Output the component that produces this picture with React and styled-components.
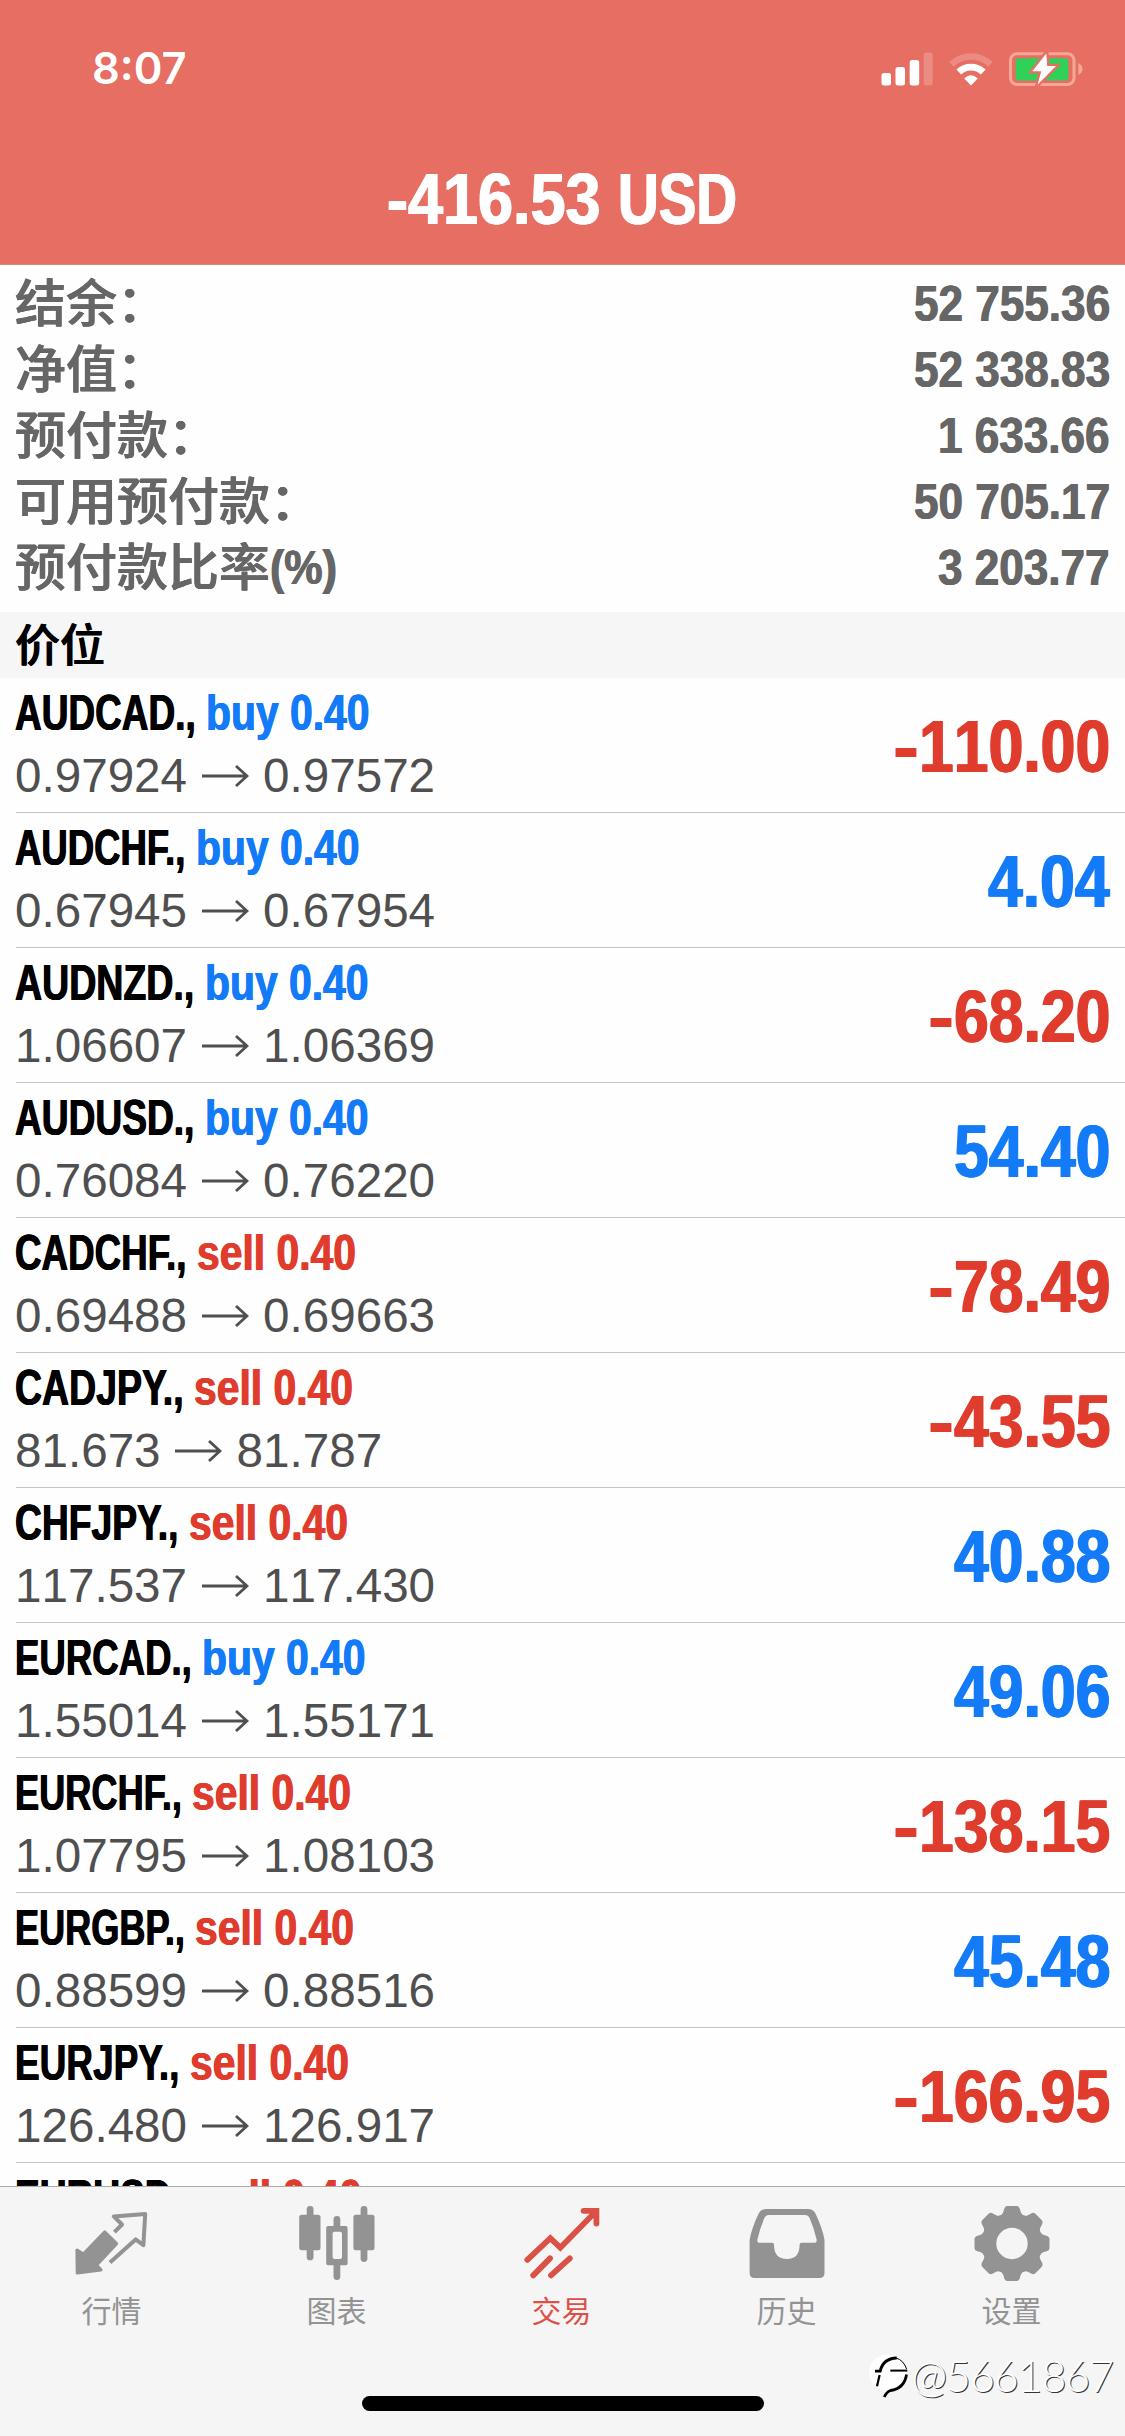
import React, { useLayoutEffect, useRef, useState } from 'react';
import styled, { createGlobalStyle } from 'styled-components';

const RED = '#e03c2d';
const BLUE = '#137bf8';
const LATIN = '"Liberation Sans", Arial, sans-serif';
const HAN = '"Noto Sans CJK SC", sans-serif';

const GlobalStyle = createGlobalStyle`
  *, *::before, *::after { box-sizing: border-box; }
  body { margin: 0; background: #fff; }
`;

const Screen = styled.div`
  position: relative;
  display: flex;
  flex-direction: column;
  width: 1125px;
  height: 2436px;
  overflow: hidden;
  background: #fefefe;
  font-family: ${LATIN};
  font-kerning: none;
`;

const Header = styled.header`
  flex: none;
  height: 265px;
  background: #e76e62;
  border-bottom: 1px solid #c98f88;
  color: #fff;
`;

const StatusBar = styled.div`
  display: flex;
  align-items: center;
  justify-content: space-between;
  height: 138px;
  padding: 0 42px 0 92px;
`;

const Clock = styled.span`
  font: 600 43.5px/1 Inter, sans-serif;
`;

const StatusIcons = styled.div`
  display: flex;
  gap: 16px;
`;

const Title = styled.h1`
  display: flex;
  justify-content: center;
  margin: 0 2px 0 0;
  padding-top: 1px;
  font-size: 73px;
  line-height: 120px;
  font-weight: bold;
`;

const FitBox = styled.span`
  display: inline-block;
  white-space: pre;
  text-shadow: ${p => `${p.$bold}px 0 currentColor, -${p.$bold}px 0 currentColor`};
`;

const FitInner = styled.span`
  display: inline-block;
  transform-origin: 0 50%;
`;

/* Condenses its text horizontally, to a given width or by a given ratio. */
function Condensed({ width, ratio, bold = 0.6, children }) {
  const inner = useRef(null);
  const [natural, setNatural] = useState(0);
  useLayoutEffect(() => {
    setNatural(parseFloat(getComputedStyle(inner.current).width));
  }, [children]);
  const w = width || natural * ratio;
  const k = natural ? w / natural : 1;
  return (
    <FitBox $bold={bold} style={{ width: w || undefined }}>
      <FitInner ref={inner} style={{ transform: `scaleX(${k})` }}>{children}</FitInner>
    </FitBox>
  );
}

const Summary = styled.section`
  flex: none;
  padding: 6px 15px 11px;
  color: #666;
`;

const SummaryRow = styled.div`
  display: flex;
  justify-content: space-between;
  height: 66px;
`;

const SummaryLabel = styled.span`
  display: flex;
  font: 500 51px/58px ${HAN};
  text-shadow: 0.5px 0 currentColor, -0.5px 0 currentColor;
`;

const Unit = styled.span`
  font: bold 49px/64px ${LATIN};
`;

const SummaryValue = styled.span`
  font-weight: bold;
  font-size: 50.5px;
  line-height: 66px;
`;

const SectionHeader = styled.h2`
  flex: none;
  height: 66px;
  margin: 0;
  padding-left: 15px;
  background: #f6f6f6;
  color: #000;
  font: 500 45px/61px ${HAN};
  text-shadow: 0.4px 0 currentColor, -0.4px 0 currentColor;
`;

const Positions = styled.main`
  flex: 1;
  min-height: 0;
  overflow: hidden;
`;

const Position = styled.article`
  display: flex;
  justify-content: space-between;
  height: 135px;
  margin-left: 16px;
  padding: 3px 15px 0 0;
  border-bottom: 1px solid #c3c5c5;
`;

const Details = styled.div`
  margin-left: -1px;
`;

const Name = styled.div`
  display: flex;
  height: 63px;
  font-weight: bold;
  font-size: 50px;
  line-height: 64px;
  font-kerning: normal;
`;

const Side = styled.span`
  color: ${p => (p.$buy ? BLUE : RED)};
`;

const Prices = styled.div`
  display: flex;
  align-items: center;
  gap: 14.5px;
  height: 64px;
  color: #4f4f50;
  font-size: 47.6px;
  line-height: 64px;
`;

const Profit = styled.div`
  display: flex;
  color: ${p => (p.$gain ? BLUE : RED)};
  font-weight: bold;
  font-size: 74px;
  line-height: 132px;
`;

const TabBar = styled.footer`
  flex: none;
  height: 250px;
  background: #f5f5f5;
  border-top: 1px solid #a9aca9;
`;

const Tabs = styled.nav`
  display: grid;
  grid-template-columns: repeat(5, 225px);
  margin-left: -1px;
`;

const Tab = styled.a`
  display: flex;
  flex-direction: column;
  align-items: center;
  padding-top: 15px;
  color: ${p => (p.$active ? '#dc5145' : '#939393')};
  font: 400 30px/46px ${HAN};

  svg { display: block; }
`;

const HomeIndicator = styled.div`
  width: 402px;
  height: 15px;
  margin: 64px auto 0;
  border-radius: 8px;
  background: #000;
`;

const Watermark = styled.div`
  position: absolute;
  right: 12px;
  bottom: 36px;
  display: flex;
  align-items: center;
  color: #fff;
  font: 300 43px/48px Lato, sans-serif;
  letter-spacing: -1.1px;
  text-shadow: 1px 1px 0.5px #333;
`;

const Signal = () => (
  <svg width="52" height="34" viewBox="0 0 52 34" fill="#fff">
    <rect x="0.5" y="21" width="9.5" height="12.5" rx="2.5" />
    <rect x="14.5" y="15" width="9.5" height="18.5" rx="2.5" />
    <rect x="28.7" y="8" width="9.5" height="25.5" rx="2.5" />
    <rect x="42.7" y="0.5" width="9" height="33" rx="2.5" opacity="0.2" />
  </svg>
);

const Wifi = () => (
  <svg width="44" height="34" viewBox="0 0 44 34" fill="none" stroke="#fff">
    <path d="M2.5 12.3A28 28 0 0 1 41.5 12.3" strokeWidth="6.5" opacity="0.2" />
    <path d="M9.8 20A17.5 17.5 0 0 1 34.2 20" strokeWidth="6.8" />
    <path d="M15.2 26.4Q22 20.2 28.8 26.4L22 33.5Z" fill="#fff" stroke="none" />
  </svg>
);

const Battery = () => (
  <svg width="74" height="34" viewBox="0 0 74 34">
    <rect x="1.5" y="1.7" width="63.5" height="30.8" rx="6.5" fill="none" stroke="#f4a797" strokeWidth="3" />
    <path d="M69.3 11Q73.5 13.2 73.5 17T69.3 23Z" fill="#f4a797" />
    <rect x="6.7" y="6.2" width="52.6" height="22.2" rx="3" fill="#2fd158" />
    <path d="M37.3 1.5L23.3 19.2H32.2L28.6 32.8L47 14H38.2Z" fill="#fff" stroke="#e76e62" strokeWidth="4.5" paintOrder="stroke" />
  </svg>
);

const Arrow = () => (
  <svg width="47" height="24" viewBox="0 0 47 24" fill="none" stroke="#4f4f50" strokeWidth="2.8">
    <path d="M0 12H45M34 2L45 12L34 22" />
  </svg>
);

const QuotesIcon = () => (
  <svg width="84" height="84" viewBox="0 0 84 84">
    <path d="M7.3 71L7 48L13.4 52.2L34.6 30L46.6 41.6L26.5 63.2L31 67.8Z" fill="currentColor" stroke="currentColor" strokeWidth="3.2" strokeLinejoin="round" />
    <path d="M44.4 30.2L52 22.5L43.8 14.4L75.2 12L73.4 43.2L65.6 37.4L40 60.6" fill="none" stroke="currentColor" strokeWidth="4" strokeLinejoin="round" />
  </svg>
);

const ChartIcon = () => (
  <svg width="84" height="84" viewBox="0 0 84 84" fill="currentColor">
    <rect x="4.2" y="12.7" width="21.3" height="35.5" rx="2.5" />
    <rect x="11.7" y="4" width="6.8" height="54.3" rx="3.4" />
    <path fillRule="evenodd" d="M33.2 24H50.6Q52.6 24 52.6 26V61.3Q52.6 63.3 50.6 63.3H33.2Q31.2 63.3 31.2 61.3V26Q31.2 24 33.2 24ZM37.6 31.5V55.2Q37.6 57 39.4 57H45.2Q47 57 47 55.2V31.5Q47 29.7 45.2 29.7H39.4Q37.6 29.7 37.6 31.5Z" />
    <path d="M38.5 25V17.5A3.4 3.4 0 0 1 45.3 17.5V25ZM38.5 62.5V74.5A3.4 3.4 0 0 0 45.3 74.5V62.5Z" />
    <rect x="58.4" y="12.7" width="21.1" height="35.5" rx="2.5" />
    <rect x="65.6" y="4" width="6.8" height="56" rx="3.4" />
  </svg>
);

const TradeIcon = () => (
  <svg width="84" height="84" viewBox="0 0 84 84" fill="none" stroke="currentColor" strokeWidth="5.8" strokeLinecap="round">
    <path d="M7.3 57.8L30.3 36.2L40.3 45.7L76 9.2M63.6 8.8H76.4V21.6" />
    <path d="M13.2 73.4L30 56.4M31 73.4L49.8 56.4" />
  </svg>
);

const HistoryIcon = () => (
  <svg width="84" height="84" viewBox="0 0 84 84" fill="currentColor">
    <path fillRule="evenodd" d="M21.5 7H62.5Q68 7 70.2 11Q77.5 26 79.5 38V71Q79.5 76 74.5 76H9.6Q4.6 76 4.6 71V38Q6.6 26 13.9 11Q16.1 7 21.5 7ZM24 13Q20.8 13 19.4 16Q15 26 12.4 37.5Q11.8 40.8 15 40.8H27.2Q29 40.8 29 42.8Q29 57 41.9 57Q54.6 57 54.6 42.8Q54.6 40.8 56.4 40.8H69Q72.2 40.8 71.6 37.5Q69 26 64.6 16Q63.2 13 60 13Z" />
  </svg>
);

const TOOTH_ANGLES = [0, 45, 90, 135, 180, 225, 270, 315];

const SettingsIcon = () => (
  <svg width="84" height="84" viewBox="0 0 84 84">
    <g transform="translate(42 41.5)" fill="currentColor">
      <circle r="23" fill="none" stroke="currentColor" strokeWidth="14.6" />
      {TOOTH_ANGLES.map(a => (
        <path key={a} transform={`rotate(${a})`} d="M-13 -27.5Q-9.6 -28.5 -8.8 -31.2L-7.6 -35.2Q-6.8 -37.5 -4.4 -37.5H4.4Q6.8 -37.5 7.6 -35.2L8.8 -31.2Q9.6 -28.5 13 -27.5Z" />
      ))}
    </g>
  </svg>
);

const WatermarkLogo = () => (
  <svg width="45" height="48" viewBox="0 0 45 48">
    <ellipse cx="20.5" cy="20.5" rx="18.5" ry="18" fill="#fff" />
    <g fill="none" stroke="#000">
      <path d="M8 19.2H13.2Q16 6.5 29.7 6" strokeWidth="2.8" />
      <path d="M29 6Q36.5 8 39.6 17" strokeWidth="1" />
      <path d="M12.6 23L10 34.3" strokeWidth="2.2" />
      <path d="M23.3 18.6H40.3" strokeWidth="2" />
      <path d="M39.5 22.5Q37.5 36.5 23.5 38.5Q19.5 40 17.3 45" strokeWidth="2.8" />
    </g>
  </svg>
);

const summary = [
  { label: '结余：', value: '52 755.36' },
  { label: '净值：', value: '52 338.83' },
  { label: '预付款：', value: '1 633.66' },
  { label: '可用预付款：', value: '50 705.17' },
  { label: '预付款比率', unit: '(%)', value: '3 203.77' },
];

const positions = [
  { symbol: 'AUDCAD.', span: 191, side: 'buy', from: '0.97924', to: '0.97572', profit: '-110.00' },
  { symbol: 'AUDCHF.', span: 180.5, side: 'buy', from: '0.67945', to: '0.67954', profit: '4.04' },
  { symbol: 'AUDNZD.', span: 189.7, side: 'buy', from: '1.06607', to: '1.06369', profit: '-68.20' },
  { symbol: 'AUDUSD.', span: 189.7, side: 'buy', from: '0.76084', to: '0.76220', profit: '54.40' },
  { symbol: 'CADCHF.', span: 181.7, side: 'sell', from: '0.69488', to: '0.69663', profit: '-78.49' },
  { symbol: 'CADJPY.', span: 179, side: 'sell', from: '81.673', to: '81.787', profit: '-43.55' },
  { symbol: 'CHFJPY.', span: 173.8, side: 'sell', from: '117.537', to: '117.430', profit: '40.88' },
  { symbol: 'EURCAD.', span: 187, side: 'buy', from: '1.55014', to: '1.55171', profit: '49.06' },
  { symbol: 'EURCHF.', span: 177, side: 'sell', from: '1.07795', to: '1.08103', profit: '-138.15' },
  { symbol: 'EURGBP.', span: 180, side: 'sell', from: '0.88599', to: '0.88516', profit: '45.48' },
  { symbol: 'EURJPY.', span: 174.7, side: 'sell', from: '126.480', to: '126.917', profit: '-166.95' },
  { symbol: 'EURUSD.', span: 187.5, side: 'sell', from: '', to: '', profit: '' },
];

const tabs = [
  ['行情', QuotesIcon],
  ['图表', ChartIcon],
  ['交易', TradeIcon],
  ['历史', HistoryIcon],
  ['设置', SettingsIcon],
];

function PositionRow({ item }) {
  const buy = item.side === 'buy';
  const loss = item.profit.startsWith('-');
  return (
    <Position>
      <Details>
        <Name>
          <Condensed width={item.span}>{`${item.symbol}, `}</Condensed>
          <Side $buy={buy}>
            <Condensed width={buy ? 163.5 : 159}>{`${item.side} 0.40`}</Condensed>
          </Side>
        </Name>
        {item.from && (
          <Prices>
            <span>{item.from}</span>
            <Arrow />
            <span>{item.to}</span>
          </Prices>
        )}
      </Details>
      {item.profit && (
        <Profit $gain={!loss}>
          {loss && <Condensed width={26} bold={0.4}>-</Condensed>}
          <Condensed ratio={0.845} bold={1}>{item.profit.replace('-', '')}</Condensed>
        </Profit>
      )}
    </Position>
  );
}

export default function App() {
  return (
    <Screen>
      <GlobalStyle />
      <Header>
        <StatusBar>
          <Clock>8:07</Clock>
          <StatusIcons>
            <Signal />
            <Wifi />
            <Battery />
          </StatusIcons>
        </StatusBar>
        <Title>
          <Condensed width={231} bold={0.9}>{'-416.53 '}</Condensed>
          <Condensed width={119} bold={0.9}>USD</Condensed>
        </Title>
      </Header>
      <Summary>
        {summary.map(({ label, unit, value }) => (
          <SummaryRow key={label}>
            <SummaryLabel>
              {label}
              {unit && <Unit><Condensed width={67}>{unit}</Condensed></Unit>}
            </SummaryLabel>
            <SummaryValue>
              <Condensed ratio={0.873}>{value}</Condensed>
            </SummaryValue>
          </SummaryRow>
        ))}
      </Summary>
      <SectionHeader>价位</SectionHeader>
      <Positions>
        {positions.map(item => <PositionRow key={item.symbol} item={item} />)}
      </Positions>
      <TabBar>
        <Tabs>
          {tabs.map(([label, Icon]) => (
            <Tab key={label} $active={label === '交易'}>
              <Icon />
              {label}
            </Tab>
          ))}
        </Tabs>
        <HomeIndicator />
      </TabBar>
      <Watermark>
        <WatermarkLogo />
        <span>@5661867</span>
      </Watermark>
    </Screen>
  );
}
